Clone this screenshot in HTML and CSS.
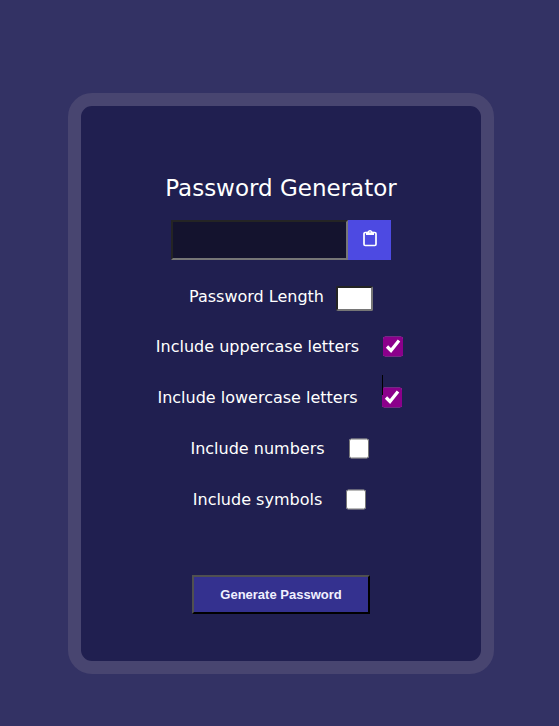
FILE: index.html
```html
<!DOCTYPE html>
<html lang="en">
<head>
<meta charset="utf-8">
<meta name="viewport" content="width=device-width, initial-scale=1">
<title>Password Generator</title>
<link rel="stylesheet" href="styles.css">
</head>
<body>
<main class="card">
  <h1 class="title">Password Generator</h1>
  <div class="result">
    <input class="result-text" type="text" aria-label="Generated password" readonly>
    <button class="copy" type="button" aria-label="Copy">
      <svg width="14" height="17" viewBox="0 0 14 17" fill="none" aria-hidden="true">
        <rect x="1" y="2.500" width="12" height="13" rx="1.200" stroke="#fff" stroke-width="1.700"/>
        <path d="M3 5V3Q3 1.800 4.200 1.800H4.700Q5.300 0 7 0T9.300 1.800H9.800Q11 1.800 11 3V5Z" fill="#fff"/>
        <circle cx="7" cy="2" r=".8" fill="#8f8dec"/>
      </svg>
    </button>
  </div>
  <div class="row length-row">
    <label for="length">Password Length</label>
    <input class="length" id="length" type="text">
  </div>
  <div class="row">
    <label for="upper">Include uppercase letters</label>
    <input class="check" id="upper" type="checkbox" checked>
  </div>
  <div class="row">
    <label for="lower">Include lowercase letters</label>
    <span class="marked"><input class="check" id="lower" type="checkbox" checked></span>
  </div>
  <div class="row">
    <label for="numbers">Include numbers</label>
    <input class="check" id="numbers" type="checkbox">
  </div>
  <div class="row">
    <label for="symbols">Include symbols</label>
    <input class="check" id="symbols" type="checkbox">
  </div>
  <button class="generate" type="button">Generate Password</button>
</main>
</body>
</html>
```
FILE: styles.css
```css
* {
  box-sizing: border-box;
}

body {
  margin: 0;
  padding: 93px 65px 52px 68px;
  background: #333264;
  color: #fff;
  font: 16px/22px Verdana, "DejaVu Sans", sans-serif;
}

.card {
  display: flex;
  flex-direction: column;
  align-items: center;
  max-width: 426px;
  margin: 0 auto;
  padding: 66px 0 47px;
  border: 13px solid #484570;
  border-radius: 24px;
  background: #201f50;
}

.title {
  margin: 0 0 16px;
  font-size: 23px;
  font-weight: 400;
  line-height: 32px;
}

.result {
  display: flex;
  height: 40px;
  margin-bottom: 26px;
}

.result-text {
  width: 177px;
  border: 2px solid;
  border-color: #242424 #767676 #767676 #242424;
  background: #14132e;
  color: #fff;
}

.copy {
  display: flex;
  justify-content: center;
  align-items: flex-start;
  width: 43px;
  padding: 10px 0 0;
  border: 0;
  background: #4d4ae2;
}

.row {
  display: flex;
  align-items: flex-start;
  gap: 24px;
  height: 22px;
  margin-bottom: 29px;
  padding-right: 3px;
}

.length-row {
  gap: 12px;
  height: 25px;
  margin-bottom: 25px;
  padding: 0;
}

.length {
  width: 37px;
  height: 25px;
  border: 2px solid;
  border-color: #242424 #767676 #767676 #242424;
  border-radius: 2px;
  background: #fff;
}

.check {
  display: block;
  width: 20px;
  height: 21px;
  margin: 0;
  accent-color: #8b008b;
}

.marked {
  position: relative;
}

.marked::before {
  content: "";
  position: absolute;
  top: -12px;
  left: 0;
  z-index: 1;
  width: 1px;
  height: 20px;
  background: #000;
}

.generate {
  width: 178px;
  height: 39px;
  margin-top: 35px;
  border: 2px solid;
  border-color: #505050 #000 #000 #505050;
  background: #34318f;
  color: #f0f0ff;
  font: bold 13px "Liberation Sans", Arial, sans-serif;
}
```
